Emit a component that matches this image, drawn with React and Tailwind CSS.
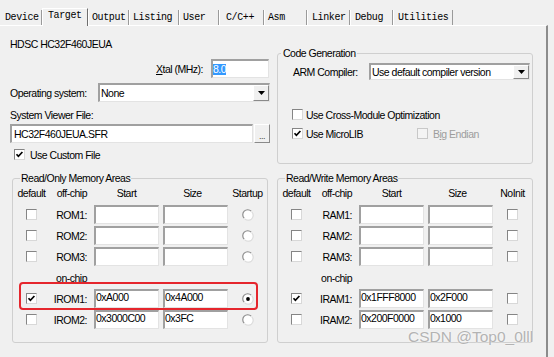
const sunken =
  'bg-white border-t-2 border-l-2 border-b border-r border-t-[#a0a0a0] border-l-[#a0a0a0] border-b-[#e3e3e3] border-r-[#e3e3e3]';
const raised =
  'bg-[#f0f0f0] border border-t-white border-l-white border-b-[#8a8a8a] border-r-[#8a8a8a]';

const tabs = [
  { t: 'Device', cls: '-ml-[2px] w-[44px] pl-[6px]' },
  { t: 'Target', cls: 'w-[46px] pl-[5px]', on: true },
  { t: 'Output', cls: 'w-[41px] pl-[3px]' },
  { t: 'Listing', cls: 'w-[50px] pl-[3px]' },
  { t: 'User', cls: 'w-[40px] pl-[3px]' },
  { t: 'C/C++', cls: 'w-[45px] pl-[6px]' },
  { t: 'Asm', cls: 'w-[43px] pl-[3px]' },
  { t: 'Linker', cls: 'w-[43px] pl-[4px]' },
  { t: 'Debug', cls: 'w-[43px] pl-[4px]' },
  { t: 'Utilities', cls: 'w-[60px] pl-[4px]' },
];

function TabStrip() {
  return (
    <div className="flex h-[25px] items-end font-['Liberation_Mono',monospace] text-[10px] tracking-[-0.4px]">
      {tabs.map(tab =>
        tab.on ? (
          <div key={tab.t} className={`relative z-10 -mb-[1px] flex h-[18px] items-center border-t border-l border-r border-t-white border-l-white border-r-[#6e6e6e] bg-[#f0f0f0] pb-[3px] ${tab.cls}`}>
            {tab.t}
          </div>
        ) : (
          <div key={tab.t} className={`flex h-[15px] items-center border-l border-r border-l-white border-r-[#9a9a9a] ${tab.cls}`}>
            {tab.t}
          </div>
        )
      )}
    </div>
  );
}

function Check({ on, dim }) {
  return (
    <span className={`flex h-[11px] w-[11px] shrink-0 items-center justify-center border ${dim ? 'border-[#c8c8c8] bg-[#f4f4f4]' : 'border-t-[#858585] border-l-[#858585] border-b-[#d8d8d8] border-r-[#d8d8d8] bg-white'}`}>
      {on && (
        <svg width="9" height="9" viewBox="0 0 9 9">
          <path d="M1.5 4.2 3.4 6.3 7.4 2" fill="none" stroke="#000" strokeWidth="1.7" />
        </svg>
      )}
    </span>
  );
}

function Radio({ on }) {
  return (
    <svg width="12" height="12" viewBox="0 0 12 12">
      <circle cx="6" cy="6" r="4.6" fill="#fff" />
      <path d="M2.2 9.2A4.8 4.8 0 0 1 9.2 2.2" fill="none" stroke="#8a8a8a" strokeWidth="1.1" />
      <path d="M2.8 9.8A4.8 4.8 0 0 0 9.8 2.8" fill="none" stroke="#dcdcdc" strokeWidth="1.1" />
      {on && <circle cx="6" cy="6" r="1.9" fill="#000" />}
    </svg>
  );
}

function Field({ value, className = '' }) {
  return <div className={`h-[19px] leading-[12px] ${sunken} ${className}`}>{value}</div>;
}

function Combo({ value, className = '' }) {
  return (
    <div className={`flex ${sunken} ${className}`}>
      <span className="flex-1 self-center pl-[1px]">{value}</span>
      <span className={`flex w-[16px] items-center justify-center ${raised}`}>
        <svg width="7" height="4" viewBox="0 0 7 4">
          <path d="M0 0h7L3.5 4z" fill="#000" />
        </svg>
      </span>
    </div>
  );
}

function LeftTop() {
  return (
    <div className="flex w-[260px] flex-col">
      <div className="mt-[12px]">HDSC HC32F460JEUA</div>
      <div className="mt-[9px] flex h-[19px] items-center justify-end pr-[1px]">
        <span><span className="underline">X</span>tal (MHz):</span>
        <div className={`ml-[8px] flex h-[19px] w-[58px] items-center ${sunken}`}>
          <span className="bg-[#3399ff] leading-[11px] text-white">8.0</span>
        </div>
      </div>
      <div className="mt-[5px] flex h-[19px] items-center">
        <span>Operating system:</span>
        <Combo value="None" className="ml-auto h-[19px] w-[172px]" />
      </div>
      <div className="mt-[7px]">System Viewer File:</div>
      <div className="mt-[3px] flex h-[19px]">
        <Field value="HC32F460JEUA.SFR" className="flex flex-1 items-center pl-[2px]" />
        <div className={`ml-[1px] flex w-[16px] items-end justify-center pb-[1px] text-[9px] leading-[9px] text-[#444] ${raised}`}>...</div>
      </div>
      <div className="mt-[5px] flex h-[13px] items-center gap-[5px] pl-[4px]">
        <Check on />
        <span>Use Custom File</span>
      </div>
    </div>
  );
}

function CodeGen() {
  return (
    <fieldset className="ml-[7px] mt-[21px] h-[117px] w-[256px] rounded-[3px] border border-[#cfcfcf]">
      <legend className="ml-[3px] px-[2px] leading-[12px]">Code Generation</legend>
      <div className="mt-[4px] flex h-[17px] items-center">
        <span className="pl-[15px]">ARM Compiler:</span>
        <Combo value="Use default compiler version" className="ml-auto mr-[2px] h-[17px] w-[161px]" />
      </div>
      <div className="mt-[28px] flex h-[13px] items-center gap-[3px] pl-[14px]">
        <Check />
        <span>Use Cross-Module Optimization</span>
      </div>
      <div className="mt-[6px] flex h-[13px] items-center pl-[14px]">
        <div className="flex w-[125px] items-center gap-[3px]">
          <Check on />
          <span>Use MicroLIB</span>
        </div>
        <Check dim />
        <span className="ml-[5px] text-[#9d9d9d]">B<span className="underline">i</span>g Endian</span>
      </div>
    </fieldset>
  );
}

function MemGroup({ title, tail, rows, radio }) {
  return (
    <fieldset className="h-[171px] w-[256px] rounded-[3px] border border-[#cfcfcf]">
      <legend className="ml-[7px] px-[1px] leading-[12px]">{title}</legend>
      <div className="mt-[3px] flex">
        <div className="w-[37px] text-center">default</div>
        <div className="w-[37px] text-right">off-chip</div>
        <div className="ml-[7px] w-[65px] text-center">Start</div>
        <div className="ml-[4px] w-[65px] pr-[6px] text-center">Size</div>
        <div className="flex-1 text-center">{tail}</div>
      </div>
      <div className="mt-[6px]">
        {rows.map((r, i) =>
          r.sep ? (
            <div key={i} className="mt-[2px] flex h-[19px] items-center">
              <div className="w-[37px]" />
              <div className="w-[37px] text-right">on-chip</div>
            </div>
          ) : (
            <div key={i} className="relative mt-[2px] flex h-[19px] items-center">
              <div className="flex w-[37px] justify-center"><Check on={r.on} /></div>
              <div className="w-[37px] text-right">{r.name}</div>
              <Field value={r.start} className="ml-[7px] w-[65px]" />
              <Field value={r.size} className="ml-[4px] w-[65px]" />
              <div className="flex flex-1 justify-center">{radio ? <Radio on={r.pick} /> : <Check />}</div>
              {r.mark && (
                <div className="pointer-events-none absolute -top-[7px] left-[6px] h-[28px] w-[239px] rounded-[4px] border-[2.5px] border-[#e5262d]" />
              )}
            </div>
          )
        )}
      </div>
    </fieldset>
  );
}

const romRows = [
  { name: 'ROM1:' },
  { name: 'ROM2:' },
  { name: 'ROM3:' },
  { sep: true },
  { name: 'IROM1:', on: true, start: '0xA000', size: '0x4A000', pick: true, mark: true },
  { name: 'IROM2:', start: '0x3000C00', size: '0x3FC' },
];

const ramRows = [
  { name: 'RAM1:' },
  { name: 'RAM2:' },
  { name: 'RAM3:' },
  { sep: true },
  { name: 'IRAM1:', on: true, start: '0x1FFF8000', size: '0x2F000' },
  { name: 'IRAM2:', start: '0x200F0000', size: '0x1000' },
];

export default function App() {
  return (
    <div className="relative h-[357px] w-[554px] overflow-hidden bg-[#f0f0f0] font-['Liberation_Sans',Arial,sans-serif] text-[10.5px] leading-[12px] tracking-[-0.5px] text-black">
      <TabStrip />
      <div className="h-[332px] w-[548px] border-t border-r-2 border-t-white border-r-[#8c8c8c]">
        <div className="flex h-[146px] pl-[10px]">
          <LeftTop />
          <CodeGen />
        </div>
        <div className="flex gap-[9px] pl-[12px]">
          <MemGroup title="Read/Only Memory Areas" tail="Startup" rows={romRows} radio />
          <MemGroup title="Read/Write Memory Areas" tail="NoInit" rows={ramRows} />
        </div>
      </div>
      <div className="absolute left-[408px] top-[328px] text-[15.5px] leading-[18px] tracking-normal text-[#b3b3b3] [text-shadow:0_0_2px_#ffffff]">
        CSDN @Top0_0lll
      </div>
    </div>
  );
}
